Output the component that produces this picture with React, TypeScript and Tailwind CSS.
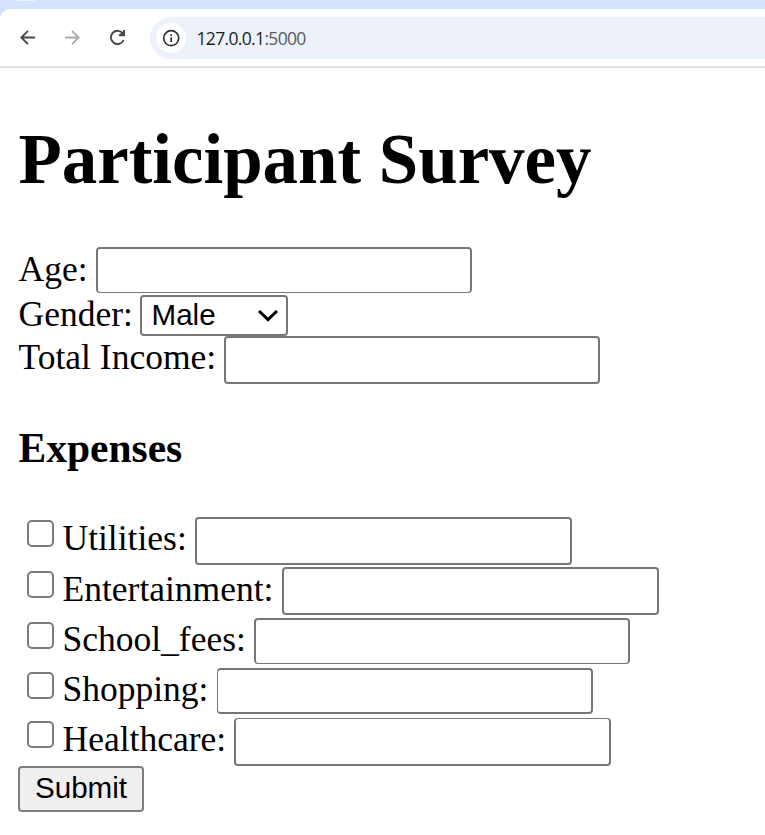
const text =
  "block shrink-0 h-[40px] leading-[40px] text-[35.5px] whitespace-pre";

type RowProps = {
  label: string;
  row: string;
  labelBox: string;
  field: string;
  check?: string;
};

function Row({ label, row, labelBox, field, check }: RowProps) {
  return (
    <div className={`flex items-start ${row}`}>
      {check !== undefined && (
        <input
          type="checkbox"
          className={`ml-[8.5px] mr-[8.5px] h-[27px] w-[27px] shrink-0 appearance-none rounded-[5px] border-2 border-[#7b7b7b] bg-white ${check}`}
        />
      )}
      <label className={`${text} pl-[0.5px] ${labelBox}`}>{label}</label>
      <input
        type="text"
        className={`block shrink-0 rounded-[4px] border-[#767676] bg-white outline-none ${field}`}
      />
    </div>
  );
}

function Toolbar() {
  return (
    <header className="h-[68px] bg-[#d3e3fd]">
      <div className="flex h-[9px] pl-[16px]">
        <div className="h-[1px] w-[19px] rounded-b-full bg-[#edf2fc]" />
      </div>
      <div className="flex h-[59px] items-start rounded-tl-[10px] border-b-2 border-[#e1e1e1] bg-white">
        <svg className="ml-[20px] mt-[21px] shrink-0" width="16" height="16" viewBox="0 0 16 16" fill="none" stroke="#474747" strokeWidth="1.8">
          <path d="M15 7.5H1.8M8 0.8L1.3 7.5L8 14.2" />
        </svg>
        <svg className="ml-[29px] mt-[21px] shrink-0" width="16" height="16" viewBox="0 0 16 16" fill="none" stroke="#ababab" strokeWidth="1.8">
          <path d="M0 7.5H13.2M7 0.8L13.7 7.5L7 14.2" />
        </svg>
        <svg className="ml-[28px] mt-[20px] shrink-0" width="18" height="18" viewBox="0 0 18 18" fill="none" stroke="#474747" strokeWidth="1.9">
          <path d="M14 4.7A6.6 6.6 0 1 0 14.6 11M15.1 1V6.2H9.8M11.5 5.8L14.8 3" />
        </svg>
        <div className="ml-[23px] mt-[8px] flex h-[42px] grow items-center rounded-l-full bg-[#ecf1fa] pl-[6px]">
          <div className="flex h-[30px] w-[30px] items-center justify-center rounded-full bg-white">
            <svg width="18" height="18" viewBox="0 0 18 18" fill="none" stroke="#303134" strokeWidth="1.7">
              <circle cx="9.2" cy="9.2" r="7.5" />
              <path d="M9.2 8.2V13M9.2 5.2V7" />
            </svg>
          </div>
          <span className="ml-[10.5px] mt-px font-['Open_Sans',sans-serif] text-[17.5px] tracking-[-0.66px] text-[#1f1f1f]">
            127.0.0.1<span className="text-[#5a5c60]">:5000</span>
          </span>
        </div>
      </div>
    </header>
  );
}

export default function App() {
  return (
    <div className="h-[835px] w-[765px] overflow-hidden bg-white font-['Liberation_Serif',serif] text-black">
      <Toolbar />
      <main className="pl-[18px]">
        <h1 className="mt-[51px] h-[80px] pl-[0.5px] text-[70.9px] font-bold leading-[80px]">Participant Survey</h1>
        <form className="mt-[48px]">
          <Row label="Age:" row="h-[46px]" labelBox="mt-[2px] w-[78px]" field="h-[46px] w-[376px] border-2 border-b" />
          <div className="flex h-[43px] items-start">
            <label className={`${text} mt-px w-[122px] pl-[0.5px]`}>Gender:</label>
            <div className="mt-[2px] flex h-[41px] w-[148px] items-start justify-between rounded-[4px] border-2 border-[#767676] bg-white pl-[9.5px] pr-[8px] font-['Liberation_Sans',sans-serif] text-[29.6px] leading-[35px]">
              <span>Male</span>
              <svg className="mt-[12px]" width="20" height="14" viewBox="0 0 20 14" fill="none" stroke="#000" strokeWidth="3">
                <path d="M1 2L10 10.6L19 2" />
              </svg>
            </div>
          </div>
          <Row label="Total Income:" row="h-[48px]" labelBox="mt-px w-[206px]" field="h-[48px] w-[376px] border-2" />
          <h3 className="mt-[40px] h-[48px] pl-[0.5px] text-[41.5px] font-bold leading-[48px]">Expenses</h3>
          <div className="mt-[45px]">
            <Row label="Utilities:" check="mt-[3.3px]" row="h-[50px]" labelBox="mt-px w-[133px]" field="h-[48px] w-[377px] border-2" />
            <Row label="Entertainment:" check="mt-[4.3px]" row="h-[51px]" labelBox="mt-[2px] w-[220px]" field="h-[48px] w-[377px] border-2" />
            <Row label="School_fees:" check="mt-[4px]" row="h-[50px]" labelBox="mt-px w-[192px]" field="h-[46px] w-[376px] border-2 border-b" />
            <Row label="Shopping:" check="mt-[3.5px]" row="h-[50px]" labelBox="mt-px w-[155px]" field="h-[46px] w-[376px] border-2 border-l" />
            <Row label="Healthcare:" check="mt-[3.3px]" row="h-[48px]" labelBox="mt-px w-[172px]" field="h-[48px] w-[377px] border-2 border-t" />
          </div>
          <button
            type="button"
            className="block h-[46px] w-[126px] rounded-[4px] border-2 border-[#7e7e7e] bg-[#efefef] pb-[2px] text-center font-['Liberation_Sans',sans-serif] text-[29.6px] leading-[40px]"
          >
            Submit
          </button>
        </form>
      </main>
    </div>
  );
}
